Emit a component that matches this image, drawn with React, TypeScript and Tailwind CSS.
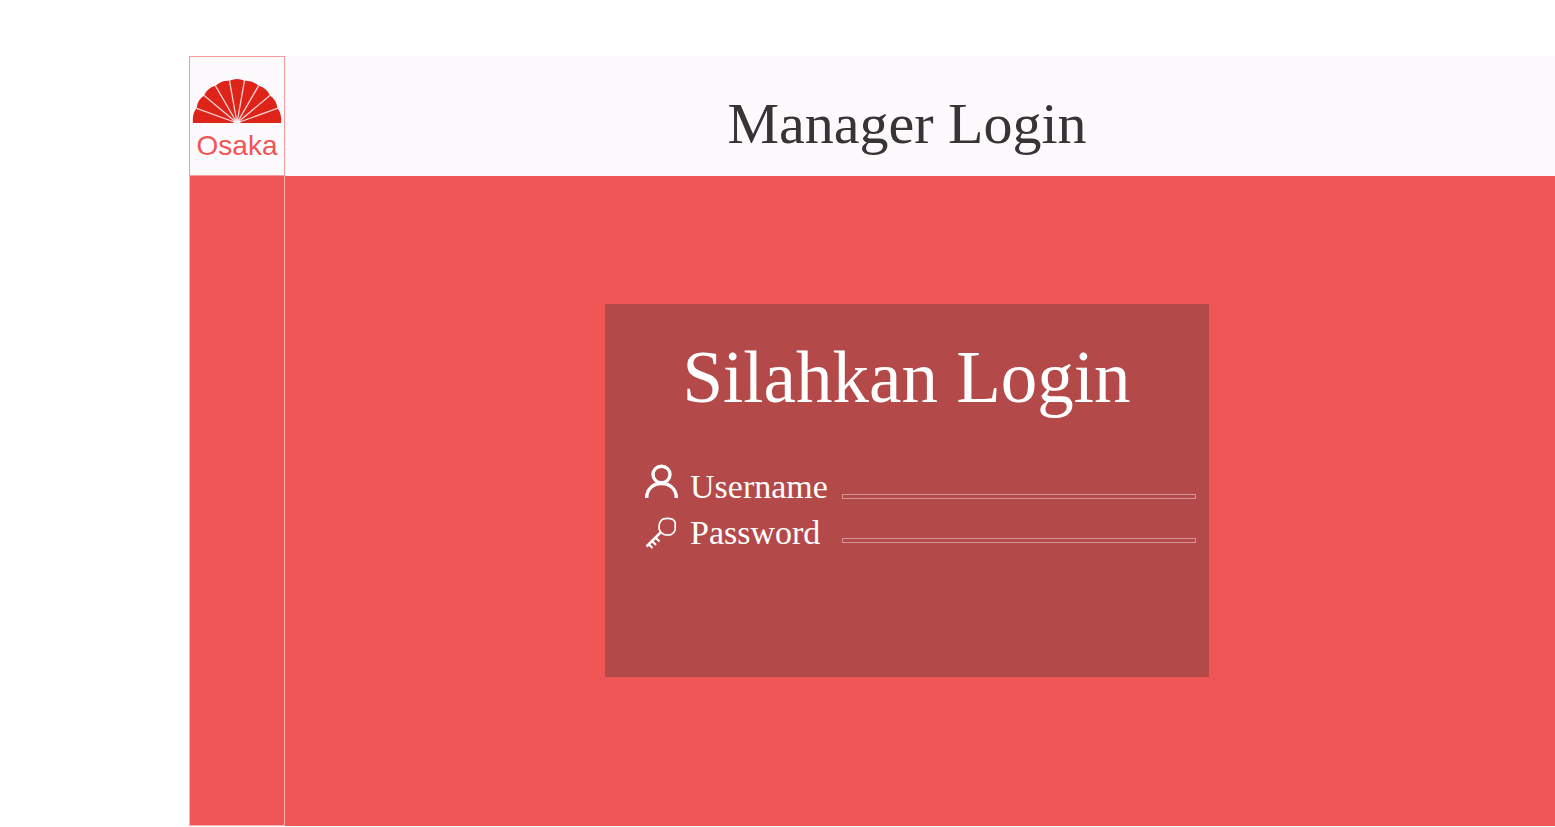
function OsakaFan() {
  return (
    <svg className="h-[46px] w-[90px]" viewBox="0 0 90 46" aria-hidden="true">
      <path
        d="M1 45C0.400 40 1.200 34 4.600 30.300A17 17 0 0 1 12.100 17.400A17 17 0 0 1 23.500 7.800A18 18 0 0 1 37.500 2.700A18 18 0 0 1 52.500 2.700A18 18 0 0 1 66.500 7.800A17 17 0 0 1 77.900 17.400A17 17 0 0 1 85.400 30.300C88.800 34 89.600 40 89 45Z"
        fill="#de2318"
      />
      <path
        d="M45 45L4.600 30.300M45 45L12.100 17.400M45 45L23.500 7.800M45 45L37.500 2.700M45 45L52.500 2.700M45 45L66.500 7.800M45 45L77.900 17.400M45 45L85.400 30.300"
        stroke="#f6d3d4"
        strokeWidth="1.3"
      />
      <path d="M41.500 45.500a3.500 3 0 0 1 7 0Z" fill="#fcfafd" />
    </svg>
  );
}

function UserIcon() {
  return (
    <svg className="h-[46px] w-[34px]" viewBox="0 0 34 46" fill="none" stroke="white" aria-hidden="true">
      <ellipse cx="16.500" cy="10.500" rx="8.500" ry="8.300" strokeWidth="3.400" />
      <path d="M1.700 34C1.700 25 8 19.500 16.500 19.500S31.300 25 31.300 34" strokeWidth="3.400" />
    </svg>
  );
}

function KeyIcon() {
  return (
    <svg className="h-[46px] w-[34px]" viewBox="0 0 34 46" fill="none" stroke="white" aria-hidden="true">
      <path
        d="M18.500 8.800Q22.500 8 26.500 8.800Q30 10.500 30.200 13V20Q29 23.500 26 24.600Q22 25.600 18.500 24.200Q14 21.500 14 17.500Q14 11 18.500 8.800Z"
        strokeWidth="1.700"
        strokeLinejoin="round"
      />
      <path d="M16 22L1.500 36.500" strokeWidth="2.500" />
      <path d="M10.500 27.500L14.500 31.500M7 31L11 35M3.500 34L7.500 38" strokeWidth="2.100" />
    </svg>
  );
}

export default function App() {
  return (
    <div className="flex min-h-screen flex-col bg-white pt-14 pb-px pl-[189px] font-['Liberation_Serif',serif]">
      <header className="flex h-[120px] bg-[#fcfafd]">
        <a
          href="#"
          className="flex w-24 shrink-0 flex-col items-center border border-[#f79b9c] pt-[21px] font-['Liberation_Sans',sans-serif] text-[28px] leading-[44px] text-[#f15656]"
        >
          <OsakaFan />
          Osaka
        </a>
        <div className="flex grow items-center justify-center pt-4 pr-[26px]">
          <h1 className="text-[58px] leading-[58px] text-[#373435]">Manager Login</h1>
        </div>
      </header>
      <div className="flex grow bg-[#f15656]">
        <aside className="w-24 shrink-0 border-r border-b border-l border-[#f9b0b0]" />
        <main className="flex grow items-start justify-center pt-32 pr-[26px] pb-8">
          <section className="min-h-[373px] w-full max-w-[604px] bg-[#b44949] pt-[37px] pr-[13px] pl-10 text-white">
            <h2 className="pr-7 text-center text-[73px] leading-[73px] whitespace-nowrap">Silahkan Login</h2>
            <form className="mt-[50px] flex">
              <div className="w-[197px] shrink-0 text-[34px] leading-[46px]">
                <label htmlFor="username" className="flex gap-[11px]">
                  <UserIcon />
                  Username
                </label>
                <label htmlFor="password" className="flex gap-[11px]">
                  <KeyIcon />
                  Password
                </label>
              </div>
              <div className="flex grow flex-col gap-[39px] pt-[30px]">
                <input
                  id="username"
                  type="text"
                  className="h-[5px] w-full border border-[#d29494] bg-transparent text-xs outline-none"
                />
                <input
                  id="password"
                  type="password"
                  className="h-[5px] w-full border border-[#d29494] bg-transparent text-xs outline-none"
                />
              </div>
            </form>
          </section>
        </main>
      </div>
    </div>
  );
}
